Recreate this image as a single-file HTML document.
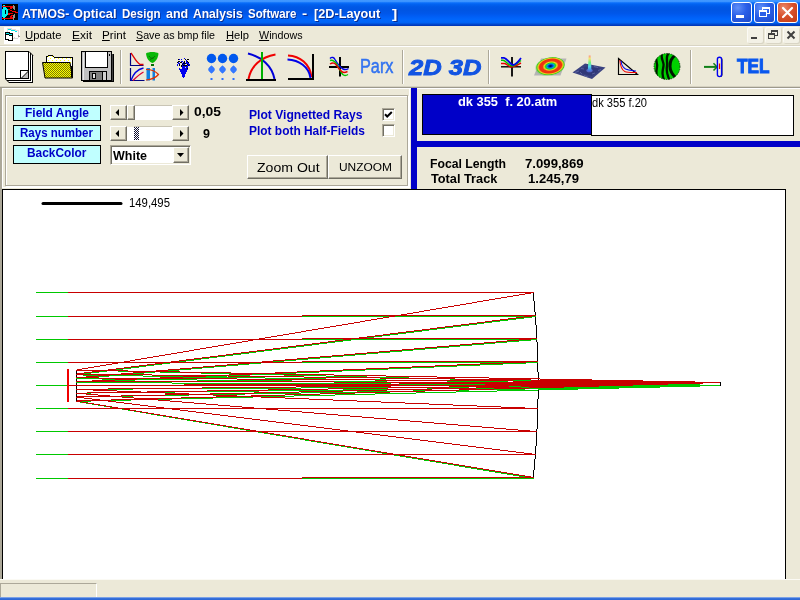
<!DOCTYPE html>
<html><head><meta charset="utf-8"><title>ATMOS</title>
<style>
*{box-sizing:border-box;margin:0;padding:0}
html,body{width:800px;height:600px;overflow:hidden;background:#ece9d8;font-family:"Liberation Sans",sans-serif;}
body{position:relative}
.a{position:absolute}
.tx{position:absolute;white-space:pre;transform-origin:0 0;line-height:1.149;font-family:"Liberation Sans",sans-serif}
#title{left:0;top:0;width:800px;height:26px;background:linear-gradient(to bottom,#4298ff 0%,#3b93ff 6%,#0a6efa 11%,#0262f0 17%,#0058e6 26%,#0055e3 40%,#0057ea 52%,#005df4 62%,#0066fc 74%,#0064f6 86%,#0050d8 92%,#003cc0 96%,#0034b4 100%)}
.lbl{position:absolute;background:#c0ffff;border:1px solid #000}
.btn{position:absolute;background:#ece9d8;border:1px solid;border-color:#fff #716f64 #716f64 #fff;box-shadow:inset -1px -1px 0 #aca899}
.sunk{position:absolute;background:#fff;border:1px solid;border-color:#aca899 #fff #fff #aca899;box-shadow:inset 1px 1px 0 #716f64, inset -1px -1px 0 #ece9d8}
.sep{position:absolute;width:2px;border-left:1px solid #aca899;border-right:1px solid #fff}
</style></head><body>

<div id="title" class="a"></div>
<span class="tx" style="left:22.06px;top:7.3px;font-size:13px;font-weight:bold;font-style:normal;color:#fff;transform:scaleX(0.9391);text-shadow:1px 1px 0 #0c2c8c;">ATMOS-</span>
<span class="tx" style="left:73.26px;top:7.3px;font-size:13px;font-weight:bold;font-style:normal;color:#fff;transform:scaleX(0.9869);text-shadow:1px 1px 0 #0c2c8c;">Optical</span>
<span class="tx" style="left:122.11px;top:7.3px;font-size:13px;font-weight:bold;font-style:normal;color:#fff;transform:scaleX(0.8882);text-shadow:1px 1px 0 #0c2c8c;">Design</span>
<span class="tx" style="left:165.79px;top:7.3px;font-size:13px;font-weight:bold;font-style:normal;color:#fff;transform:scaleX(0.9622);text-shadow:1px 1px 0 #0c2c8c;">and</span>
<span class="tx" style="left:192.77px;top:7.3px;font-size:13px;font-weight:bold;font-style:normal;color:#fff;transform:scaleX(0.9292);text-shadow:1px 1px 0 #0c2c8c;">Analysis</span>
<span class="tx" style="left:247.82px;top:7.3px;font-size:13px;font-weight:bold;font-style:normal;color:#fff;transform:scaleX(0.8797);text-shadow:1px 1px 0 #0c2c8c;">Software</span>
<span class="tx" style="left:302.30px;top:7.3px;font-size:13px;font-weight:bold;font-style:normal;color:#fff;transform:scaleX(1.1971);text-shadow:1px 1px 0 #0c2c8c;">-</span>
<span class="tx" style="left:313.72px;top:7.3px;font-size:13px;font-weight:bold;font-style:normal;color:#fff;transform:scaleX(0.9751);text-shadow:1px 1px 0 #0c2c8c;">[2D-Layout</span>
<span class="tx" style="left:392.28px;top:7.3px;font-size:13px;font-weight:bold;font-style:normal;color:#fff;transform:scaleX(1.2201);text-shadow:1px 1px 0 #0c2c8c;">]</span>
<div class="a" style="left:731px;top:2px;width:21px;height:21px;border:1px solid #fff;border-radius:3px;background:radial-gradient(circle at 30% 25%,#5f8ff8 0%,#2a5fe8 45%,#1c49c8 100%)"><div class="a" style="left:4px;top:12px;width:8px;height:3px;background:#fff"></div></div><div class="a" style="left:754px;top:2px;width:21px;height:21px;border:1px solid #fff;border-radius:3px;background:radial-gradient(circle at 30% 25%,#5f8ff8 0%,#2a5fe8 45%,#1c49c8 100%)"><div class="a" style="left:7px;top:4px;width:8px;height:7px;border:1px solid #fff;border-top-width:2px"></div><div class="a" style="left:4px;top:7px;width:8px;height:7px;border:1px solid #fff;border-top-width:2px;background:#2a5fe8"></div></div><div class="a" style="left:777px;top:2px;width:21px;height:21px;border:1px solid #fff;border-radius:3px;background:radial-gradient(circle at 30% 25%,#e8876a 0%,#d8512c 45%,#c03a14 100%)"><svg class="a" style="left:0;top:0" width="19" height="19"><path d="M5 5L14 14M14 5L5 14" stroke="#fff" stroke-width="2.2" stroke-linecap="round"/></svg></div>
<span class="tx" style="left:25.27px;top:29.3px;font-size:11px;font-weight:normal;font-style:normal;color:#000;transform:scaleX(1.0286);"><u>U</u>pdate</span>
<span class="tx" style="left:72.21px;top:29.3px;font-size:11px;font-weight:normal;font-style:normal;color:#000;transform:scaleX(1.0903);"><u>E</u>xit</span>
<span class="tx" style="left:102.24px;top:29.3px;font-size:11px;font-weight:normal;font-style:normal;color:#000;transform:scaleX(1.0608);"><u>P</u>rint</span>
<span class="tx" style="left:136.33px;top:29.3px;font-size:11px;font-weight:normal;font-style:normal;color:#000;transform:scaleX(0.9714);"><u>S</u>ave as bmp file</span>
<span class="tx" style="left:226.28px;top:29.3px;font-size:11px;font-weight:normal;font-style:normal;color:#000;transform:scaleX(1.0166);"><u>H</u>elp</span>
<span class="tx" style="left:259.33px;top:29.3px;font-size:11px;font-weight:normal;font-style:normal;color:#000;transform:scaleX(0.9748);"><u>W</u>indows</span>
<div class="a" style="left:747px;top:27px;width:16px;height:16px;background:#f3f1e6;border-radius:2px;box-shadow:1px 1px 0 #d9d5c5, inset 1px 1px 0 #fbfaf5"><div class="a" style="left:4px;top:10px;width:6px;height:2px;background:#404040"></div></div><div class="a" style="left:765px;top:27px;width:16px;height:16px;background:#f3f1e6;border-radius:2px;box-shadow:1px 1px 0 #d9d5c5, inset 1px 1px 0 #fbfaf5"><div class="a" style="left:6px;top:3px;width:7px;height:6px;border:1px solid #404040;border-top-width:2px"></div><div class="a" style="left:3px;top:6px;width:7px;height:6px;border:1px solid #404040;border-top-width:2px;background:#ece9d8"></div></div><div class="a" style="left:783px;top:27px;width:16px;height:16px;background:#f3f1e6;border-radius:2px;box-shadow:1px 1px 0 #d9d5c5, inset 1px 1px 0 #fbfaf5"><svg class="a" style="left:0;top:0" width="16" height="16"><path d="M4.5 4.5L11.5 11.5M11.5 4.5L4.5 11.5" stroke="#404040" stroke-width="2"/></svg></div>
<div class="a" style="left:0;top:45px;width:800px;height:1px;background:#d8d4c4"></div>
<div class="a" style="left:0;top:46px;width:800px;height:1px;background:#fff"></div>
<svg class="a" style="left:0;top:0" width="800" height="90" fill="none">
<defs>
<pattern id="dy" width="2" height="2" patternUnits="userSpaceOnUse"><rect width="2" height="2" fill="#ffff00"/><rect width="1" height="1" fill="#7a7a00"/><rect x="1" y="1" width="1" height="1" fill="#7a7a00"/></pattern>
<pattern id="dl" width="4" height="4" patternUnits="userSpaceOnUse"><rect width="4" height="4" fill="#fff"/><rect width="1" height="1" fill="#ffff00"/><rect x="2" y="2" width="1" height="1" fill="#ffff00"/></pattern>
<linearGradient id="spk" x1="0" y1="0" x2="0" y2="1"><stop offset="0" stop-color="#ff9080"/><stop offset=".2" stop-color="#f0e870"/><stop offset=".45" stop-color="#70f080"/><stop offset=".7" stop-color="#50d8f0"/><stop offset="1" stop-color="#4070e0"/></linearGradient>
<radialGradient id="wf" cx=".52" cy=".48" r=".5"><stop offset="0" stop-color="#000018"/><stop offset=".12" stop-color="#0028c8"/><stop offset=".24" stop-color="#00a8e0"/><stop offset=".33" stop-color="#20d020"/><stop offset=".43" stop-color="#e8e020"/><stop offset=".54" stop-color="#f03810"/><stop offset=".74" stop-color="#f03010"/><stop offset=".84" stop-color="#e8d020"/><stop offset=".93" stop-color="#40d020"/><stop offset="1" stop-color="#60c840" stop-opacity=".3"/></radialGradient>
<clipPath id="cc"><circle cx="667" cy="66.5" r="13"/></clipPath>
<filter id="bl" x="-10%" y="-10%" width="120%" height="120%"><feGaussianBlur stdDeviation=".55"/></filter>
</defs>
<g shape-rendering="crispEdges"><rect x="2" y="4" width="16" height="16" fill="#000"/>
<path d="M3 5h2v1h-2zM4 19h1v1h-1z" fill="#00f0f0"/><path d="M3 7h3v1h1v1h1v6h-1v1h-1v1h-1v1h-2v-1h-1v-8h1z" fill="#00f0f0"/><rect x="5" y="10" width="1" height="4" fill="#000"/>
<path d="M2 6h11v1h-11zM2 18h11v1h-11zM10 7h3v1h-1v1h-2zM10 16h2v1h1v1h-3zM8 9h2v1h2v1h4v1h2v1h-3v-1h-3v-1h-2v-1h-2zM8 13h5v1h-3v1h-2zM11 15h2v1h-2z" fill="#f00000"/>
<path d="M13 5h1v1h1v4h-1v-1h-1zM14 7h1v3h-1zM13 15h1v-1h1v4h-1v2h-1z" fill="#909090"/></g>
<g shape-rendering="crispEdges"><rect x="4" y="27" width="16" height="17" fill="#fff"/>
<path d="M7.500 28.500h4v1h4v1h2.500v7" stroke="#e8d8d8"/><path d="M7.500 28v5" stroke="#e0e0e0"/>
<path d="M8 29.500h3M11 30.500h4M15 31.500h2" stroke="#00e8e8"/>
<path d="M18 35h1v1h1v1h-2z" fill="#909090"/><path d="M13 38h1v-1h1v1h3v1h-5z" fill="#d8d8d8"/>
<path d="M5.500 32.500h4v1h3v7h-4v-1h-3z" fill="#fff" stroke="#000"/><path d="M6 34.500h3M9 35.500h3" stroke="#000"/>
<path d="M6 33.500h3M9 34.500h3" stroke="#00e8e8"/></g>
<g shape-rendering="crispEdges">
<path d="M9 55h24v28H9z" fill="#fff"/><path d="M7 53h24v28H7z" fill="#fff"/>
<path d="M32.5 55v28M9 82.5h24" stroke="#000"/><path d="M30.5 53v28M7 80.5h24" stroke="#000"/>
<rect x="5.5" y="51.5" width="23" height="27" fill="#fff" stroke="#000"/>
<path d="M21 78v-7h7z" fill="#fff"/><path d="M28 71v7h-7z" fill="#c0c0c0"/><path d="M20.5 79v-8.500h8.500" stroke="#000"/></g>
<path d="M28.500 71L21 78.500M29 51.500l4 4M5.500 79l4 4" stroke="#000"/>
<g shape-rendering="crispEdges">
<path d="M46.500 62v-5l2-1.500h4l2 2h18v20h-1" fill="url(#dl)" stroke="#000"/>
<path d="M42.500 62.500h27.500l2.500 15.500h-27.500z" fill="url(#dy)" stroke="#000" shape-rendering="auto"/>
<path d="M71.500 66v11" stroke="#000"/>
</g>
<g shape-rendering="crispEdges">
<path d="M83 82h30v-28h-1v27h-29z" fill="#404040"/><path d="M83 81h30v-27" stroke="#000" fill="none"/>
<rect x="81.500" y="51.500" width="30" height="29" fill="#c0c0c0" stroke="#000"/>
<path d="M83 53v27" stroke="#e8e8e8"/>
<rect x="85.500" y="51.500" width="22" height="16" fill="#fff" stroke="#000"/>
<path d="M109 54v2" stroke="#000"/>
<rect x="89.500" y="71.500" width="17" height="9" fill="#808080" stroke="#000"/>
<rect x="103" y="72" width="3" height="8" fill="#d0d0d0"/><path d="M102.500 72v8" stroke="#000"/>
<rect x="92.500" y="73.500" width="3" height="5" fill="#e8e8e8" stroke="#000"/>
</g>
<g>
<path d="M130.500 53v12.500h13M130.500 68v12.500h14" stroke="#000080" stroke-width="1.2"/>
<path d="M131 53c3 4 5 9 9 11.500h3.500" stroke="#e00000" stroke-width="1.300"/>
<path d="M131 80.500c2-6 6-11 12.500-12.500" stroke="#0000e0" stroke-width="1.300"/><path d="M133 80.500c3-3 6-6 10.500-8.500" stroke="#e00030" stroke-width="1.300"/>
<path d="M146 53.500c2-2 10.500-2 12.500 0c-.5 5-3 8.500-6 9.500c-3.500-1-6-4.500-6.500-9.500z" fill="#08b808"/><path d="M149 56c2 3 4 3 6 0M150 59.500l4-2" stroke="#087008" stroke-width="1"/><rect x="151" y="64" width="3" height="2" fill="#007000"/>
<rect x="146.500" y="68" width="3.500" height="12.500" fill="#1080e0"/><rect x="152.500" y="68" width="2.500" height="12.500" fill="#1080e0"/>
<path d="M146 69.500c6 0 10 2 12.500 5c-2.500 3-6.500 5-12.500 5.500" stroke="#e03000" stroke-width="1.200"/>
</g>
<g shape-rendering="crispEdges"><path d="M184 58.5h1M179 59.5h1M181 59.5h1M186 60.5h1M181 61.5h1M182 61.5h1M186 61.5h1M178 62.5h1M183 62.5h1M186 62.5h1M187 62.5h1M178 63.5h1M179 63.5h1M182 63.5h1M186 63.5h1M187 63.5h1M188 63.5h1M177 64.5h1M183 64.5h1M184 64.5h1M188 64.5h1M189 64.5h1M177 65.5h1M182 65.5h1M187 65.5h1M189 65.5h1M182 66.5h1M183 66.5h1M184 66.5h1M185 66.5h1M186 66.5h1M187 66.5h1M182 67.5h1M183 67.5h1M184 67.5h1M186 67.5h1M187 67.5h1M179 68.5h1M182 68.5h1M183 68.5h1M184 68.5h1M185 68.5h1M186 68.5h1M179 69.5h1M180 69.5h1M181 69.5h1M182 69.5h1M183 69.5h1M184 69.5h1M185 69.5h1M186 69.5h1M187 69.5h1M180 70.5h1M181 70.5h1M182 70.5h1M183 70.5h1M184 70.5h1M185 70.5h1M186 70.5h1M180 71.5h1M181 71.5h1M182 71.5h1M183 71.5h1M184 71.5h1M185 71.5h1M186 71.5h1M181 72.5h1M182 72.5h1M183 72.5h1M184 72.5h1M185 72.5h1M181 73.5h1M182 73.5h1M183 73.5h1M184 73.5h1M185 73.5h1M182 74.5h1M183 74.5h1M184 74.5h1M182 75.5h1M183 75.5h1M184 75.5h1M182 76.5h1M183 76.5h1M184 76.5h1M183 77.5h1" stroke="#0000f0"/><path d="M178 59.5h1M185 59.5h1M187 59.5h1M188 59.5h1M178 61.5h1M179 61.5h1M184 61.5h1M187 61.5h1M177 62.5h1M180 62.5h1M181 62.5h1M184 62.5h1M188 62.5h1M183 63.5h1M184 63.5h1M185 63.5h1M179 64.5h1M182 64.5h1M187 64.5h1M179 65.5h1M181 65.5h1M183 65.5h1M184 65.5h1M185 65.5h1M186 65.5h1M188 65.5h1M181 66.5h1M187 68.5h1" stroke="#000"/></g>
<circle cx="211.5" cy="58.500" r="4.700" fill="#0058ee"/>
<path d="M211.5 65.800c1.500 1 3 2.300 3 3.700s-1.500 2.700-3 3.700c-1.500-1-3-2.300-3-3.700s1.500-2.700 3-3.700z" fill="#3378ff" stroke="#3378ff" stroke-width=".6"/>
<rect x="210.5" y="78" width="2" height="2" fill="#2a70ff"/>
<circle cx="222.5" cy="58.500" r="4.700" fill="#0058ee"/>
<path d="M222.5 65.800c1.500 1 3 2.300 3 3.700s-1.500 2.700-3 3.700c-1.500-1-3-2.300-3-3.700s1.500-2.700 3-3.700z" fill="#3378ff" stroke="#3378ff" stroke-width=".6"/>
<rect x="221.5" y="78" width="2" height="2" fill="#2a70ff"/>
<circle cx="233.5" cy="58.500" r="4.700" fill="#0058ee"/>
<path d="M233.5 65.800c1.500 1 3 2.300 3 3.700s-1.500 2.700-3 3.700c-1.500-1-3-2.300-3-3.700s1.500-2.700 3-3.700z" fill="#3378ff" stroke="#3378ff" stroke-width=".6"/>
<rect x="232.5" y="78" width="2" height="2" fill="#2a70ff"/>
<path d="M248 53.500C262 57 272 66 274.500 79" stroke="#0000d8" stroke-width="2"/>
<path d="M248.500 79C251 66 261 57 275.500 54.500" stroke="#f00000" stroke-width="2"/>
<path d="M262 52v27" stroke="#00b000" stroke-width="2"/>
<path d="M246 80h30" stroke="#000" stroke-width="2"/>
<path d="M288 55.500C300 56 310 64 311.500 77" stroke="#f00000" stroke-width="2"/>
<path d="M287.500 59.500C299 60 309 67 310.500 78" stroke="#0000e8" stroke-width="2"/>
<path d="M313 54v26M288 79h26" stroke="#000" stroke-width="2"/>
<path d="M340 57v19.500M329 67h20" stroke="#000" stroke-width="2"/>
<path d="M330 58.500c2-2 4-1 5 1c3 5 5 8 8 9.500c2 1 4 .5 5.500-.5" stroke="#0000e8" stroke-width="1.400"/>
<path d="M330 60.500c3-1 5 1 7 4c3 5 4 9 6.500 10.500c1.500 1 3 .5 4.500-.5" stroke="#00c800" stroke-width="1.400"/>
<path d="M330 64c3-2 5-1 7 2c2 3 4 6 7 6.500c1.500 0 2.500-.5 3.500-1" stroke="#e80000" stroke-width="1.400"/>
<path d="M512 57v19.500" stroke="#000" stroke-width="1.800"/><path d="M501 66.800h20" stroke="#000" stroke-width="1.400"/>
<path d="M501 63.500h3.500c2.500.5 4 3 6.500 3.500c4-.3 6.500-2 10-4" stroke="#e80000" stroke-width="1.500"/>
<path d="M501 60.300h2c3 .5 5.500 5 9 5.700c4-.5 6-3.500 9-5.500" stroke="#00c000" stroke-width="1.500"/>
<path d="M501 57.800h3c3 .5 5.500 6 9 7.200c3.500-.5 5.500-4 8-7" stroke="#0000e8" stroke-width="1.800"/>
<path d="M541 58.500h25.500l-6 17h-26.500z" fill="#b4b4b4"/>
<ellipse cx="550" cy="66.500" rx="15" ry="9.200" fill="url(#wf)" transform="rotate(-10 550 66.500)"/>
<path d="M572.500 72.500L585 63.500L605.500 67.500L592 79z" fill="#3a4280"/><path d="M577 72l8.500-5.500 16 2.300-9.500 7.200z" fill="#303878"/>
<path d="M575 72.500l4-1.500M581 68.500l3 .5M594 66.500l4 1M598 70.500l3-1M584 75.500l4 1.500M592 74l3-1M580 72l2 2" stroke="#5a64a0" stroke-width=".9"/>
<ellipse cx="589.500" cy="70.500" rx="3.200" ry="1.800" fill="#5568c8"/>
<path d="M588.700 55.500h1.900l.9 15c-1.200 1-2.500 1-3.700 0z" fill="url(#spk)"/>
<path d="M618.500 58.500v16h19z" stroke="#000" stroke-width="1.150" stroke-linejoin="miter"/>
<path d="M619.800 60c.5 6 2 10 5 11.500c3 1.300 7 1 12 1" stroke="#f00000" stroke-width="1.050"/>
<path d="M621 61c.5 4 2 6.500 4.500 8c3 1.500 6 1.500 10.500 2" stroke="#0000f0" stroke-width="1.050"/>
<circle cx="667" cy="66.500" r="13" fill="#00d000"/>
<g clip-path="url(#cc)" stroke="#001400" stroke-width="2.300" fill="none" filter="url(#bl)">
<path d="M656.500 53c-2 6 1.500 10 .5 14c-1 5-1 9 1 13"/><path d="M662.500 52c-3 6 2 10 1 14c-1 5-2 9 1 15"/><path d="M669.500 52c-5 5-1.500 9-2.500 14c-1 5 0 9 3 15"/><path d="M677 54c-6.500 4-7 8-7 12.500c0 4 2 8 6.500 12" stroke-width="3"/>
</g><circle cx="667" cy="66.500" r="13" stroke="#0a300a" stroke-width=".8" stroke-dasharray="1.500 1"/>
<path d="M704 66.900h13" stroke="#108018" stroke-width="2"/><path d="M713.500 63.300l3.500 3.600l-3.500 3.600" stroke="#108018" stroke-width="1.500"/>
<rect x="718.300" y="57.600" width="4.200" height="19.400" rx="2.100" fill="#181818"/><rect x="717.400" y="57.200" width="4.200" height="19.400" rx="2.100" fill="#f0ecd8" stroke="#0000f0" stroke-width="1.400"/><path d="M719.500 63.500v5.500" stroke="#f00000" stroke-width="1.200"/>
</svg>
<div class="sep" style="left:120px;top:50px;height:34px"></div>
<div class="sep" style="left:402px;top:50px;height:34px"></div>
<div class="sep" style="left:488px;top:50px;height:34px"></div>
<div class="sep" style="left:690px;top:50px;height:34px"></div>
<span class="tx" style="left:360.33px;top:55.3px;font-size:19.5px;font-weight:normal;font-style:normal;color:#3273f0;transform:scaleX(0.8352);-webkit-text-stroke:0.5px #3273f0;">Parx</span>
<span class="tx" style="left:408.86px;top:55.3px;font-size:22.5px;font-weight:bold;font-style:italic;color:#1254e2;transform:scaleX(1.1367);-webkit-text-stroke:0.9px #1254e2;">2D 3D</span>
<span class="tx" style="left:737.12px;top:55.3px;font-size:19.5px;font-weight:bold;font-style:normal;color:#0a58ee;transform:scaleX(0.8821);-webkit-text-stroke:1px #0a58ee;">TEL</span>
<div class="a" style="left:0;top:86px;width:800px;height:1px;background:#d6d2c2"></div>
<div class="a" style="left:0;top:87px;width:800px;height:1px;background:#9d9a8c"></div>
<div class="a" style="left:2px;top:88px;width:798px;height:1px;background:#fff"></div>
<div class="a" style="left:2px;top:88px;width:1px;height:100px;background:#fff"></div>
<div class="a" style="left:0;top:88px;width:2px;height:491px;background:#aca899"></div>
<div class="a" style="left:2px;top:187px;width:408px;height:1px;background:#fff"></div><div class="a" style="left:409px;top:88px;width:1px;height:100px;background:#fff"></div>
<div class="a" style="left:5px;top:95px;width:403px;height:91px;border:1px solid #aca899;box-shadow:1px 1px 0 #fff, inset 1px 1px 0 #fff"></div>
<div class="lbl" style="left:13px;top:105px;width:88px;height:16px"></div>
<span class="tx" style="left:25.00px;top:107.3px;font-size:12px;font-weight:bold;font-style:normal;color:#0000c8;transform:scaleX(0.9964);">Field Angle</span>
<div class="lbl" style="left:13px;top:125px;width:88px;height:16px"></div>
<span class="tx" style="left:20.34px;top:127.3px;font-size:12px;font-weight:bold;font-style:normal;color:#0000c8;transform:scaleX(0.9601);">Rays number</span>
<div class="lbl" style="left:13px;top:145px;width:88px;height:19px"></div>
<span class="tx" style="left:27.31px;top:147.3px;font-size:12px;font-weight:bold;font-style:normal;color:#0000c8;transform:scaleX(0.9912);">BackColor</span>
<div class="a" style="left:110px;top:105px;width:79px;height:15px;background:#fff;border-top:1px solid #c9c5b5"></div><div class="btn" style="left:110px;top:105px;width:17px;height:15px"></div><div class="btn" style="left:172px;top:105px;width:17px;height:15px"></div><svg class="a" style="left:110px;top:105px" width="79" height="15"><path d="M9 4v7l-3.500-3.500zM70 4v7l3.500-3.500z" fill="#000"/></svg><div class="btn" style="left:127px;top:105px;width:8px;height:15px"></div>
<div class="a" style="left:110px;top:126px;width:79px;height:15px;background:#fff;border-top:1px solid #c9c5b5"></div><div class="btn" style="left:110px;top:126px;width:17px;height:15px"></div><div class="btn" style="left:172px;top:126px;width:17px;height:15px"></div><svg class="a" style="left:110px;top:126px" width="79" height="15"><path d="M9 4v7l-3.500-3.500zM70 4v7l3.500-3.500z" fill="#000"/></svg><div class="a" style="left:127px;top:126px;width:7px;height:15px;background:#fff;border-top:1px solid #ece9d8"></div><svg class="a" style="left:134px;top:127px" width="5" height="13"><defs><pattern id="dt" width="2" height="2" patternUnits="userSpaceOnUse"><rect width="2" height="2" fill="#fff"/><rect width="1" height="1" fill="#101030"/><rect x="1" y="1" width="1" height="1" fill="#101030"/></pattern></defs><rect width="5" height="13" fill="url(#dt)" shape-rendering="crispEdges"/></svg>
<span class="tx" style="left:194.14px;top:106.3px;font-size:12px;font-weight:bold;font-style:normal;color:#000;transform:scaleX(1.1559);">0,05</span>
<span class="tx" style="left:202.95px;top:128.3px;font-size:12px;font-weight:bold;font-style:normal;color:#000;transform:scaleX(1.0467);">9</span>
<div class="sunk" style="left:110px;top:145px;width:81px;height:20px"></div>
<div class="btn" style="left:173px;top:147px;width:16px;height:16px"></div><svg class="a" style="left:173px;top:147px" width="16" height="16"><path d="M4 6h7l-3.5 4z" fill="#000"/></svg>
<span class="tx" style="left:113.46px;top:150.3px;font-size:12px;font-weight:bold;font-style:normal;color:#000;transform:scaleX(1.0407);">White</span>
<span class="tx" style="left:249.29px;top:109.3px;font-size:12px;font-weight:bold;font-style:normal;color:#0000c8;transform:scaleX(1.0090);">Plot Vignetted Rays</span>
<span class="tx" style="left:249.31px;top:125.3px;font-size:12px;font-weight:bold;font-style:normal;color:#0000c8;transform:scaleX(0.9942);">Plot both Half-Fields</span>
<div class="sunk" style="left:382px;top:108px;width:13px;height:13px"></div><svg class="a" style="left:382px;top:108px" width="13" height="13"><path d="M3 6.300l2.200 2.200L9.800 4" stroke="#000" stroke-width="2" fill="none"/></svg>
<div class="sunk" style="left:382px;top:124px;width:13px;height:13px"></div>
<div class="btn" style="left:247px;top:155px;width:81px;height:24px"></div><div class="btn" style="left:328px;top:155px;width:74px;height:24px"></div>
<span class="tx" style="left:256.56px;top:160.3px;font-size:13.5px;font-weight:normal;font-style:normal;color:#000;transform:scaleX(1.0428);">Zoom Out</span>
<span class="tx" style="left:338.76px;top:161.3px;font-size:11.5px;font-weight:normal;font-style:normal;color:#000;transform:scaleX(1.0370);">UNZOOM</span>
<div class="a" style="left:411px;top:88px;width:6px;height:101px;background:#0000c8"></div>
<div class="a" style="left:417px;top:141px;width:383px;height:6px;background:#0000c8"></div>
<div class="a" style="left:422px;top:94px;width:170px;height:41px;background:#0000c8;border:1px solid #000"></div>
<div class="a" style="left:591px;top:95px;width:203px;height:41px;background:#fff;border:1px solid #000"></div>
<span class="tx" style="left:457.93px;top:96.3px;font-size:12px;font-weight:bold;font-style:normal;color:#fff;transform:scaleX(1.0710);">dk&nbsp;355&nbsp;&nbsp;f.&nbsp;20.atm</span>
<span class="tx" style="left:592.37px;top:97.3px;font-size:12px;font-weight:normal;font-style:normal;color:#000;transform:scaleX(0.9261);">dk 355 f.20</span>
<span class="tx" style="left:430.18px;top:158.3px;font-size:12px;font-weight:bold;font-style:normal;color:#000;transform:scaleX(1.0191);">Focal Length</span>
<span class="tx" style="left:524.50px;top:158.3px;font-size:12px;font-weight:bold;font-style:normal;color:#000;transform:scaleX(1.0976);">7.099,869</span>
<span class="tx" style="left:431.44px;top:173.3px;font-size:12px;font-weight:bold;font-style:normal;color:#000;transform:scaleX(1.0613);">Total Track</span>
<span class="tx" style="left:527.51px;top:173.3px;font-size:12px;font-weight:bold;font-style:normal;color:#000;transform:scaleX(1.0916);">1.245,79</span>
<div class="a" style="left:2px;top:189px;width:784px;height:390px;background:#fff;border-left:1px solid #000;border-top:1px solid #000;border-right:1px solid #000"></div>
<svg class="a" style="left:0;top:0" width="800" height="600" shape-rendering="crispEdges" fill="none" stroke-width="1">
<path stroke="#000" d="M533 292.5h1M533 293.5h1M533 294.5h1M533 295.5h1M533 296.5h1M533 297.5h1M533 298.5h1M533 299.5h1M533 300.5h1M534 301.5h1M534 302.5h1M534 303.5h1M534 304.5h1M534 305.5h1M534 306.5h1M534 307.5h1M534 308.5h1M534 309.5h1M534 310.5h1M534 311.5h1M535 312.5h1M535 313.5h1M535 314.5h1M535 315.5h1M535 316.5h1M535 317.5h1M535 318.5h1M535 319.5h1M535 320.5h1M535 321.5h1M535 322.5h1M535 323.5h1M535 324.5h1M536 325.5h1M536 326.5h1M536 327.5h1M536 328.5h1M536 329.5h1M536 330.5h1M536 331.5h1M536 332.5h1M536 333.5h1M536 334.5h1M536 335.5h1M536 336.5h1M536 337.5h1M536 338.5h1M536 339.5h1M536 340.5h1M536 341.5h1M537 342.5h1M537 343.5h1M537 344.5h1M537 345.5h1M537 346.5h1M537 347.5h1M537 348.5h1M537 349.5h1M537 350.5h1M537 351.5h1M537 352.5h1M537 353.5h1M537 354.5h1M537 355.5h1M537 356.5h1M537 357.5h1M537 358.5h1M537 359.5h1M537 360.5h1M537 361.5h1M537 362.5h1M537 363.5h1M537 364.5h1M537 365.5h1M537 366.5h1M537 367.5h1M537 368.5h1M537 369.5h1M537 370.5h1M537 371.5h1M538 372.5h1M538 373.5h1M538 374.5h1M538 375.5h1M538 376.5h1M538 377.5h1M538 378.5h1M538 379.5h1M538 380.5h1M538 381.5h1M538 382.5h1M538 383.5h1M538 384.5h1M538 385.5h1M538 386.5h1M538 387.5h1M538 388.5h1M538 389.5h1M538 390.5h1M538 391.5h1M538 392.5h1M538 393.5h1M538 394.5h1M538 395.5h1M538 396.5h1M538 397.5h1M538 398.5h1M537 399.5h1M537 400.5h1M537 401.5h1M537 402.5h1M537 403.5h1M537 404.5h1M537 405.5h1M537 406.5h1M537 407.5h1M537 408.5h1M537 409.5h1M537 410.5h1M537 411.5h1M537 412.5h1M537 413.5h1M537 414.5h1M537 415.5h1M537 416.5h1M537 417.5h1M537 418.5h1M537 419.5h1M537 420.5h1M537 421.5h1M537 422.5h1M537 423.5h1M537 424.5h1M537 425.5h1M537 426.5h1M537 427.5h1M537 428.5h1M536 429.5h1M536 430.5h1M536 431.5h1M536 432.5h1M536 433.5h1M536 434.5h1M536 435.5h1M536 436.5h1M536 437.5h1M536 438.5h1M536 439.5h1M536 440.5h1M536 441.5h1M536 442.5h1M536 443.5h1M536 444.5h1M536 445.5h1M535 446.5h1M535 447.5h1M535 448.5h1M535 449.5h1M535 450.5h1M535 451.5h1M535 452.5h1M535 453.5h1M535 454.5h1M535 455.5h1M535 456.5h1M535 457.5h1M535 458.5h1M534 459.5h1M534 460.5h1M534 461.5h1M534 462.5h1M534 463.5h1M534 464.5h1M534 465.5h1M534 466.5h1M534 467.5h1M534 468.5h1M534 469.5h1M533 470.5h1M533 471.5h1M533 472.5h1M533 473.5h1M533 474.5h1M533 475.5h1M533 476.5h1M533 477.5h1M533 478.5h1M76 370.5h1M76 371.5h1M76 372.5h1M76 373.5h1M76 374.5h1M76 375.5h1M76 376.5h1M76 377.5h1M76 378.5h1M76 379.5h1M76 380.5h1M76 381.5h1M76 382.5h1M76 383.5h1M76 384.5h1M76 385.5h1M76 386.5h1M76 387.5h1M76 388.5h1M76 389.5h1M76 390.5h1M76 391.5h1M76 392.5h1M76 393.5h1M76 394.5h1M76 395.5h1M76 396.5h1M76 397.5h1M76 398.5h1M76 399.5h1M76 400.5h1M76 401.5h1"/>
<path stroke="#00c800" d="M36 292.5h497M76 370.5h1M77 369.5h5M82 368.5h6M88 367.5h6M94 366.5h6M100 365.5h6M106 364.5h6M112 363.5h6M118 362.5h6M124 361.5h6M130 360.5h5M135 359.5h6M141 358.5h6M147 357.5h6M153 356.5h6M159 355.5h6M165 354.5h6M171 353.5h6M177 352.5h6M183 351.5h6M189 350.5h5M194 349.5h6M200 348.5h6M206 347.5h6M212 346.5h6M218 345.5h6M224 344.5h6M230 343.5h6M236 342.5h6M242 341.5h6M248 340.5h5M253 339.5h6M259 338.5h6M265 337.5h6M271 336.5h6M277 335.5h6M283 334.5h6M289 333.5h6M295 332.5h6M301 331.5h5M306 330.5h6M312 329.5h6M318 328.5h6M324 327.5h6M330 326.5h6M336 325.5h6M342 324.5h6M348 323.5h6M354 322.5h6M360 321.5h5M365 320.5h6M371 319.5h6M377 318.5h6M383 317.5h6M389 316.5h6M395 315.5h6M401 314.5h6M407 313.5h6M413 312.5h6M419 311.5h5M424 310.5h6M430 309.5h6M436 308.5h6M442 307.5h6M448 306.5h6M454 305.5h6M460 304.5h6M466 303.5h6M472 302.5h5M477 301.5h6M483 300.5h6M489 299.5h6M495 298.5h6M501 297.5h6M507 296.5h6M513 295.5h6M519 294.5h6M525 293.5h6M531 292.5h3M76 370.5h42M118 371.5h42M160 372.5h41M201 373.5h42M243 374.5h41M284 375.5h42M326 376.5h41M367 377.5h42M409 378.5h41M450 379.5h42M492 380.5h42M534 381.5h41M575 382.5h42M617 383.5h41M658 384.5h42M700 385.5h21M36 316.5h499M76 374.5h8M84 373.5h7M91 372.5h8M99 371.5h8M107 370.5h8M115 369.5h8M123 368.5h8M131 367.5h8M139 366.5h7M146 365.5h8M154 364.5h8M162 363.5h8M170 362.5h8M178 361.5h8M186 360.5h8M194 359.5h7M201 358.5h8M209 357.5h8M217 356.5h8M225 355.5h8M233 354.5h8M241 353.5h8M249 352.5h7M256 351.5h8M264 350.5h8M272 349.5h8M280 348.5h8M288 347.5h8M296 346.5h8M304 345.5h8M312 344.5h7M319 343.5h8M327 342.5h8M335 341.5h8M343 340.5h8M351 339.5h8M359 338.5h8M367 337.5h7M374 336.5h8M382 335.5h8M390 334.5h8M398 333.5h8M406 332.5h8M414 331.5h8M422 330.5h7M429 329.5h8M437 328.5h8M445 327.5h8M453 326.5h8M461 325.5h8M469 324.5h8M477 323.5h7M484 322.5h8M492 321.5h8M500 320.5h8M508 319.5h8M516 318.5h8M524 317.5h8M532 316.5h4M76 374.5h7M83 375.5h60M143 376.5h61M204 377.5h61M265 378.5h61M326 379.5h60M386 380.5h61M447 381.5h61M508 382.5h61M569 383.5h60M629 384.5h61M690 385.5h31M36 339.5h500M76 378.5h9M85 377.5h12M97 376.5h12M109 375.5h11M120 374.5h12M132 373.5h12M144 372.5h11M155 371.5h12M167 370.5h12M179 369.5h12M191 368.5h11M202 367.5h12M214 366.5h12M226 365.5h12M238 364.5h11M249 363.5h12M261 362.5h12M273 361.5h11M284 360.5h12M296 359.5h12M308 358.5h12M320 357.5h11M331 356.5h12M343 355.5h12M355 354.5h11M366 353.5h12M378 352.5h12M390 351.5h12M402 350.5h11M413 349.5h12M425 348.5h12M437 347.5h12M449 346.5h11M460 345.5h12M472 344.5h12M484 343.5h11M495 342.5h12M507 341.5h12M519 340.5h12M531 339.5h6M76 378.5h26M102 379.5h95M197 380.5h95M292 381.5h95M387 382.5h96M483 383.5h95M578 384.5h95M673 385.5h48M36 362.5h501M76 382.5h14M90 381.5h22M112 380.5h23M135 379.5h23M158 378.5h23M181 377.5h23M204 376.5h23M227 375.5h23M250 374.5h23M273 373.5h23M296 372.5h23M319 371.5h23M342 370.5h23M365 369.5h23M388 368.5h23M411 367.5h23M434 366.5h23M457 365.5h23M480 364.5h23M503 363.5h23M526 362.5h12M76 382.5h96M172 383.5h219M391 384.5h220M611 385.5h110M36 385.5h32M76 385.5h645M36 408.5h501M76 389.5h17M93 390.5h24M117 391.5h24M141 392.5h24M165 393.5h24M189 394.5h24M213 395.5h24M237 396.5h24M261 397.5h24M285 398.5h24M309 399.5h24M333 400.5h24M357 401.5h24M381 402.5h24M405 403.5h24M429 404.5h24M453 405.5h24M477 406.5h24M501 407.5h24M525 408.5h13M76 389.5h57M133 388.5h168M301 387.5h168M469 386.5h168M637 385.5h84M36 431.5h500M76 393.5h10M86 394.5h12M98 395.5h12M110 396.5h12M122 397.5h12M134 398.5h12M146 399.5h12M158 400.5h12M170 401.5h12M182 402.5h12M194 403.5h12M206 404.5h12M218 405.5h12M230 406.5h12M242 407.5h12M254 408.5h12M266 409.5h12M278 410.5h12M290 411.5h12M302 412.5h12M314 413.5h12M326 414.5h12M338 415.5h12M350 416.5h12M362 417.5h12M374 418.5h12M386 419.5h12M398 420.5h12M410 421.5h12M422 422.5h12M434 423.5h12M446 424.5h12M458 425.5h12M470 426.5h12M482 427.5h12M494 428.5h12M506 429.5h12M518 430.5h12M530 431.5h7M76 393.5h15M91 392.5h84M175 391.5h84M259 390.5h84M343 389.5h84M427 388.5h84M511 387.5h84M595 386.5h84M679 385.5h42M36 454.5h499M76 397.5h8M84 398.5h8M92 399.5h8M100 400.5h8M108 401.5h8M116 402.5h8M124 403.5h8M132 404.5h8M140 405.5h8M148 406.5h8M156 407.5h8M164 408.5h8M172 409.5h8M180 410.5h8M188 411.5h8M196 412.5h8M204 413.5h8M212 414.5h8M220 415.5h8M228 416.5h8M236 417.5h8M244 418.5h8M252 419.5h8M260 420.5h8M268 421.5h8M276 422.5h8M284 423.5h8M292 424.5h8M300 425.5h8M308 426.5h8M316 427.5h8M324 428.5h8M332 429.5h8M340 430.5h8M348 431.5h8M356 432.5h8M364 433.5h8M372 434.5h8M380 435.5h8M388 436.5h8M396 437.5h8M404 438.5h8M412 439.5h8M420 440.5h8M428 441.5h8M436 442.5h8M444 443.5h8M452 444.5h8M460 445.5h8M468 446.5h8M476 447.5h8M484 448.5h8M492 449.5h8M500 450.5h8M508 451.5h8M516 452.5h8M524 453.5h8M532 454.5h4M76 397.5h1M77 396.5h56M133 395.5h56M189 394.5h56M245 393.5h56M301 392.5h56M357 391.5h56M413 390.5h56M469 389.5h56M525 388.5h56M581 387.5h56M637 386.5h56M693 385.5h28M36 478.5h497M76 401.5h4M80 402.5h6M86 403.5h6M92 404.5h6M98 405.5h6M104 406.5h6M110 407.5h6M116 408.5h6M122 409.5h6M128 410.5h6M134 411.5h6M140 412.5h6M146 413.5h5M151 414.5h6M157 415.5h6M163 416.5h6M169 417.5h6M175 418.5h6M181 419.5h6M187 420.5h6M193 421.5h6M199 422.5h6M205 423.5h6M211 424.5h6M217 425.5h6M223 426.5h5M228 427.5h6M234 428.5h6M240 429.5h6M246 430.5h6M252 431.5h6M258 432.5h6M264 433.5h6M270 434.5h6M276 435.5h6M282 436.5h6M288 437.5h6M294 438.5h6M300 439.5h5M305 440.5h6M311 441.5h6M317 442.5h6M323 443.5h6M329 444.5h6M335 445.5h6M341 446.5h6M347 447.5h6M353 448.5h6M359 449.5h6M365 450.5h6M371 451.5h6M377 452.5h5M382 453.5h6M388 454.5h6M394 455.5h6M400 456.5h6M406 457.5h6M412 458.5h6M418 459.5h6M424 460.5h6M430 461.5h6M436 462.5h6M442 463.5h6M448 464.5h6M454 465.5h5M459 466.5h6M465 467.5h6M471 468.5h6M477 469.5h6M483 470.5h6M489 471.5h6M495 472.5h6M501 473.5h6M507 474.5h6M513 475.5h6M519 476.5h6M525 477.5h6M531 478.5h3M76 401.5h15M91 400.5h40M131 399.5h41M172 398.5h41M213 397.5h40M253 396.5h41M294 395.5h41M335 394.5h40M375 393.5h41M416 392.5h40M456 391.5h41M497 390.5h41M538 389.5h40M578 388.5h41M619 387.5h41M660 386.5h40M700 385.5h21"/>
<path stroke="#c80000" d="M68 292.5h465M76 370.5h1M77 369.5h5M82 368.5h6M88 367.5h6M94 366.5h6M100 365.5h6M106 364.5h6M112 363.5h6M118 362.5h6M124 361.5h6M130 360.5h5M135 359.5h6M141 358.5h6M147 357.5h6M153 356.5h6M159 355.5h6M165 354.5h6M171 353.5h6M177 352.5h6M183 351.5h6M189 350.5h5M194 349.5h6M200 348.5h6M206 347.5h6M212 346.5h6M218 345.5h6M224 344.5h6M230 343.5h6M236 342.5h6M242 341.5h6M248 340.5h5M253 339.5h6M259 338.5h6M265 337.5h6M271 336.5h6M277 335.5h6M283 334.5h6M289 333.5h6M295 332.5h6M301 331.5h5M306 330.5h6M312 329.5h6M318 328.5h6M324 327.5h6M330 326.5h6M336 325.5h6M342 324.5h6M348 323.5h6M354 322.5h6M360 321.5h5M365 320.5h6M371 319.5h6M377 318.5h6M383 317.5h6M389 316.5h6M395 315.5h6M401 314.5h6M407 313.5h6M413 312.5h6M419 311.5h5M424 310.5h6M430 309.5h6M436 308.5h6M442 307.5h6M448 306.5h6M454 305.5h6M460 304.5h6M466 303.5h6M472 302.5h5M477 301.5h6M483 300.5h6M489 299.5h6M495 298.5h6M501 297.5h6M507 296.5h6M513 295.5h6M519 294.5h6M525 293.5h6M531 292.5h3M76 370.5h52M128 371.5h52M180 372.5h51M231 373.5h52M283 374.5h51M334 375.5h52M386 376.5h51M437 377.5h52M489 378.5h51M540 379.5h52M592 380.5h51M643 381.5h52M695 382.5h26M68 316.5h234M302 315.5h233M76 374.5h1M77 373.5h7M84 372.5h8M92 371.5h8M100 370.5h8M108 369.5h8M116 368.5h8M124 367.5h7M131 366.5h8M139 365.5h8M147 364.5h8M155 363.5h8M163 362.5h8M171 361.5h8M179 360.5h7M186 359.5h8M194 358.5h8M202 357.5h8M210 356.5h8M218 355.5h8M226 354.5h7M233 353.5h8M241 352.5h8M249 351.5h8M257 350.5h8M265 349.5h8M273 348.5h8M281 347.5h7M288 346.5h8M296 345.5h8M304 344.5h8M312 343.5h8M320 342.5h8M328 341.5h7M335 340.5h8M343 339.5h8M351 338.5h8M359 337.5h8M367 336.5h8M375 335.5h8M383 334.5h7M390 333.5h8M398 332.5h8M406 331.5h8M414 330.5h8M422 329.5h8M430 328.5h7M437 327.5h8M445 326.5h8M453 325.5h8M461 324.5h8M469 323.5h8M477 322.5h8M485 321.5h7M492 320.5h8M500 319.5h8M508 318.5h8M516 317.5h8M524 316.5h8M532 315.5h4M76 374.5h76M152 375.5h76M228 376.5h76M304 377.5h76M380 378.5h75M455 379.5h76M531 380.5h76M607 381.5h76M683 382.5h38M68 339.5h234M302 338.5h234M76 377.5h10M86 376.5h12M98 375.5h12M110 374.5h11M121 373.5h12M133 372.5h12M145 371.5h11M156 370.5h12M168 369.5h12M180 368.5h12M192 367.5h11M203 366.5h12M215 365.5h12M227 364.5h11M238 363.5h12M250 362.5h12M262 361.5h11M273 360.5h12M285 359.5h12M297 358.5h11M308 357.5h12M320 356.5h12M332 355.5h12M344 354.5h11M355 353.5h12M367 352.5h12M379 351.5h11M390 350.5h12M402 349.5h12M414 348.5h11M425 347.5h12M437 346.5h12M449 345.5h11M460 344.5h12M472 343.5h12M484 342.5h12M496 341.5h11M507 340.5h12M519 339.5h12M531 338.5h6M76 377.5h23M99 378.5h138M237 379.5h138M375 380.5h138M513 381.5h138M651 382.5h70M68 362.5h234M302 361.5h235M76 381.5h16M92 380.5h23M115 379.5h22M137 378.5h23M160 377.5h23M183 376.5h23M206 375.5h23M229 374.5h23M252 373.5h23M275 372.5h22M297 371.5h23M320 370.5h23M343 369.5h23M366 368.5h23M389 367.5h23M412 366.5h23M435 365.5h22M457 364.5h23M480 363.5h23M503 362.5h23M526 361.5h12M76 381.5h258M334 382.5h387M68 385.5h470M76 385.5h108M184 384.5h215M399 383.5h214M613 382.5h108M68 408.5h469M76 389.5h17M93 390.5h24M117 391.5h24M141 392.5h24M165 393.5h24M189 394.5h24M213 395.5h24M237 396.5h24M261 397.5h24M285 398.5h24M309 399.5h24M333 400.5h24M357 401.5h24M381 402.5h24M405 403.5h24M429 404.5h24M453 405.5h24M477 406.5h24M501 407.5h24M525 408.5h13M76 389.5h32M108 388.5h94M202 387.5h94M296 386.5h95M391 385.5h94M485 384.5h94M579 383.5h94M673 382.5h48M68 431.5h468M76 393.5h10M86 394.5h12M98 395.5h12M110 396.5h12M122 397.5h12M134 398.5h12M146 399.5h12M158 400.5h12M170 401.5h12M182 402.5h12M194 403.5h12M206 404.5h12M218 405.5h12M230 406.5h12M242 407.5h12M254 408.5h12M266 409.5h12M278 410.5h12M290 411.5h12M302 412.5h12M314 413.5h12M326 414.5h12M338 415.5h12M350 416.5h12M362 417.5h12M374 418.5h12M386 419.5h12M398 420.5h12M410 421.5h12M422 422.5h12M434 423.5h12M446 424.5h12M458 425.5h12M470 426.5h12M482 427.5h12M494 428.5h12M506 429.5h12M518 430.5h12M530 431.5h7M76 393.5h11M87 392.5h60M147 391.5h60M207 390.5h61M268 389.5h60M328 388.5h60M388 387.5h61M449 386.5h60M509 385.5h61M570 384.5h60M630 383.5h60M690 382.5h31M68 454.5h467M76 397.5h8M84 398.5h8M92 399.5h8M100 400.5h8M108 401.5h8M116 402.5h8M124 403.5h8M132 404.5h8M140 405.5h8M148 406.5h8M156 407.5h8M164 408.5h8M172 409.5h8M180 410.5h8M188 411.5h8M196 412.5h8M204 413.5h8M212 414.5h8M220 415.5h8M228 416.5h8M236 417.5h8M244 418.5h8M252 419.5h8M260 420.5h8M268 421.5h8M276 422.5h8M284 423.5h8M292 424.5h8M300 425.5h8M308 426.5h8M316 427.5h8M324 428.5h8M332 429.5h8M340 430.5h8M348 431.5h8M356 432.5h8M364 433.5h8M372 434.5h8M380 435.5h8M388 436.5h8M396 437.5h8M404 438.5h8M412 439.5h8M420 440.5h8M428 441.5h8M436 442.5h8M444 443.5h8M452 444.5h8M460 445.5h8M468 446.5h8M476 447.5h8M484 448.5h8M492 449.5h8M500 450.5h8M508 451.5h8M516 452.5h8M524 453.5h8M532 454.5h4M76 397.5h1M77 396.5h44M121 395.5h44M165 394.5h45M210 393.5h44M254 392.5h45M299 391.5h44M343 390.5h44M387 389.5h45M432 388.5h44M476 387.5h45M521 386.5h44M565 385.5h44M609 384.5h45M654 383.5h44M698 382.5h23M68 478.5h234M302 477.5h231M76 401.5h6M82 402.5h6M88 403.5h6M94 404.5h6M100 405.5h6M106 406.5h6M112 407.5h6M118 408.5h6M124 409.5h6M130 410.5h6M136 411.5h6M142 412.5h6M148 413.5h6M154 414.5h6M160 415.5h6M166 416.5h6M172 417.5h6M178 418.5h6M184 419.5h6M190 420.5h6M196 421.5h6M202 422.5h6M208 423.5h6M214 424.5h6M220 425.5h6M226 426.5h6M232 427.5h6M238 428.5h6M244 429.5h6M250 430.5h6M256 431.5h6M262 432.5h6M268 433.5h6M274 434.5h6M280 435.5h6M286 436.5h6M292 437.5h6M298 438.5h6M304 439.5h5M309 440.5h6M315 441.5h6M321 442.5h6M327 443.5h6M333 444.5h6M339 445.5h6M345 446.5h6M351 447.5h6M357 448.5h6M363 449.5h6M369 450.5h6M375 451.5h6M381 452.5h6M387 453.5h6M393 454.5h6M399 455.5h6M405 456.5h6M411 457.5h6M417 458.5h6M423 459.5h6M429 460.5h6M435 461.5h6M441 462.5h6M447 463.5h6M453 464.5h6M459 465.5h6M465 466.5h6M471 467.5h6M477 468.5h6M483 469.5h6M489 470.5h6M495 471.5h6M501 472.5h6M507 473.5h6M513 474.5h6M519 475.5h6M525 476.5h6M531 477.5h3M76 401.5h1M77 400.5h34M111 399.5h35M146 398.5h35M181 397.5h35M216 396.5h35M251 395.5h34M285 394.5h35M320 393.5h35M355 392.5h35M390 391.5h35M425 390.5h34M459 389.5h35M494 388.5h35M529 387.5h35M564 386.5h35M599 385.5h34M633 384.5h35M668 383.5h35M703 382.5h18"/>
<path stroke="#f00000" stroke-width="2" d="M68 369v33"/>
<path stroke="#000" d="M720.5 382v4"/>
<path stroke="#000" stroke-width="3" stroke-linecap="round" d="M43 203.5h78" shape-rendering="auto"/>
</svg>
<span class="tx" style="left:128.66px;top:197.3px;font-size:12px;font-weight:normal;font-style:normal;color:#000;transform:scaleX(0.9449);">149,495</span>
<div class="a" style="left:0;top:579px;width:800px;height:1px;background:#fbfaf4"></div>
<div class="a" style="left:0;top:583px;width:97px;height:15px;border:1px solid;border-color:#aca899 #fff #fff #aca899"></div>
<div class="a" style="left:0;top:597px;width:800px;height:3px;background:linear-gradient(#b9cdf0 0,#3a74dc 34%,#2a64d4 100%)"></div>
</body></html>
